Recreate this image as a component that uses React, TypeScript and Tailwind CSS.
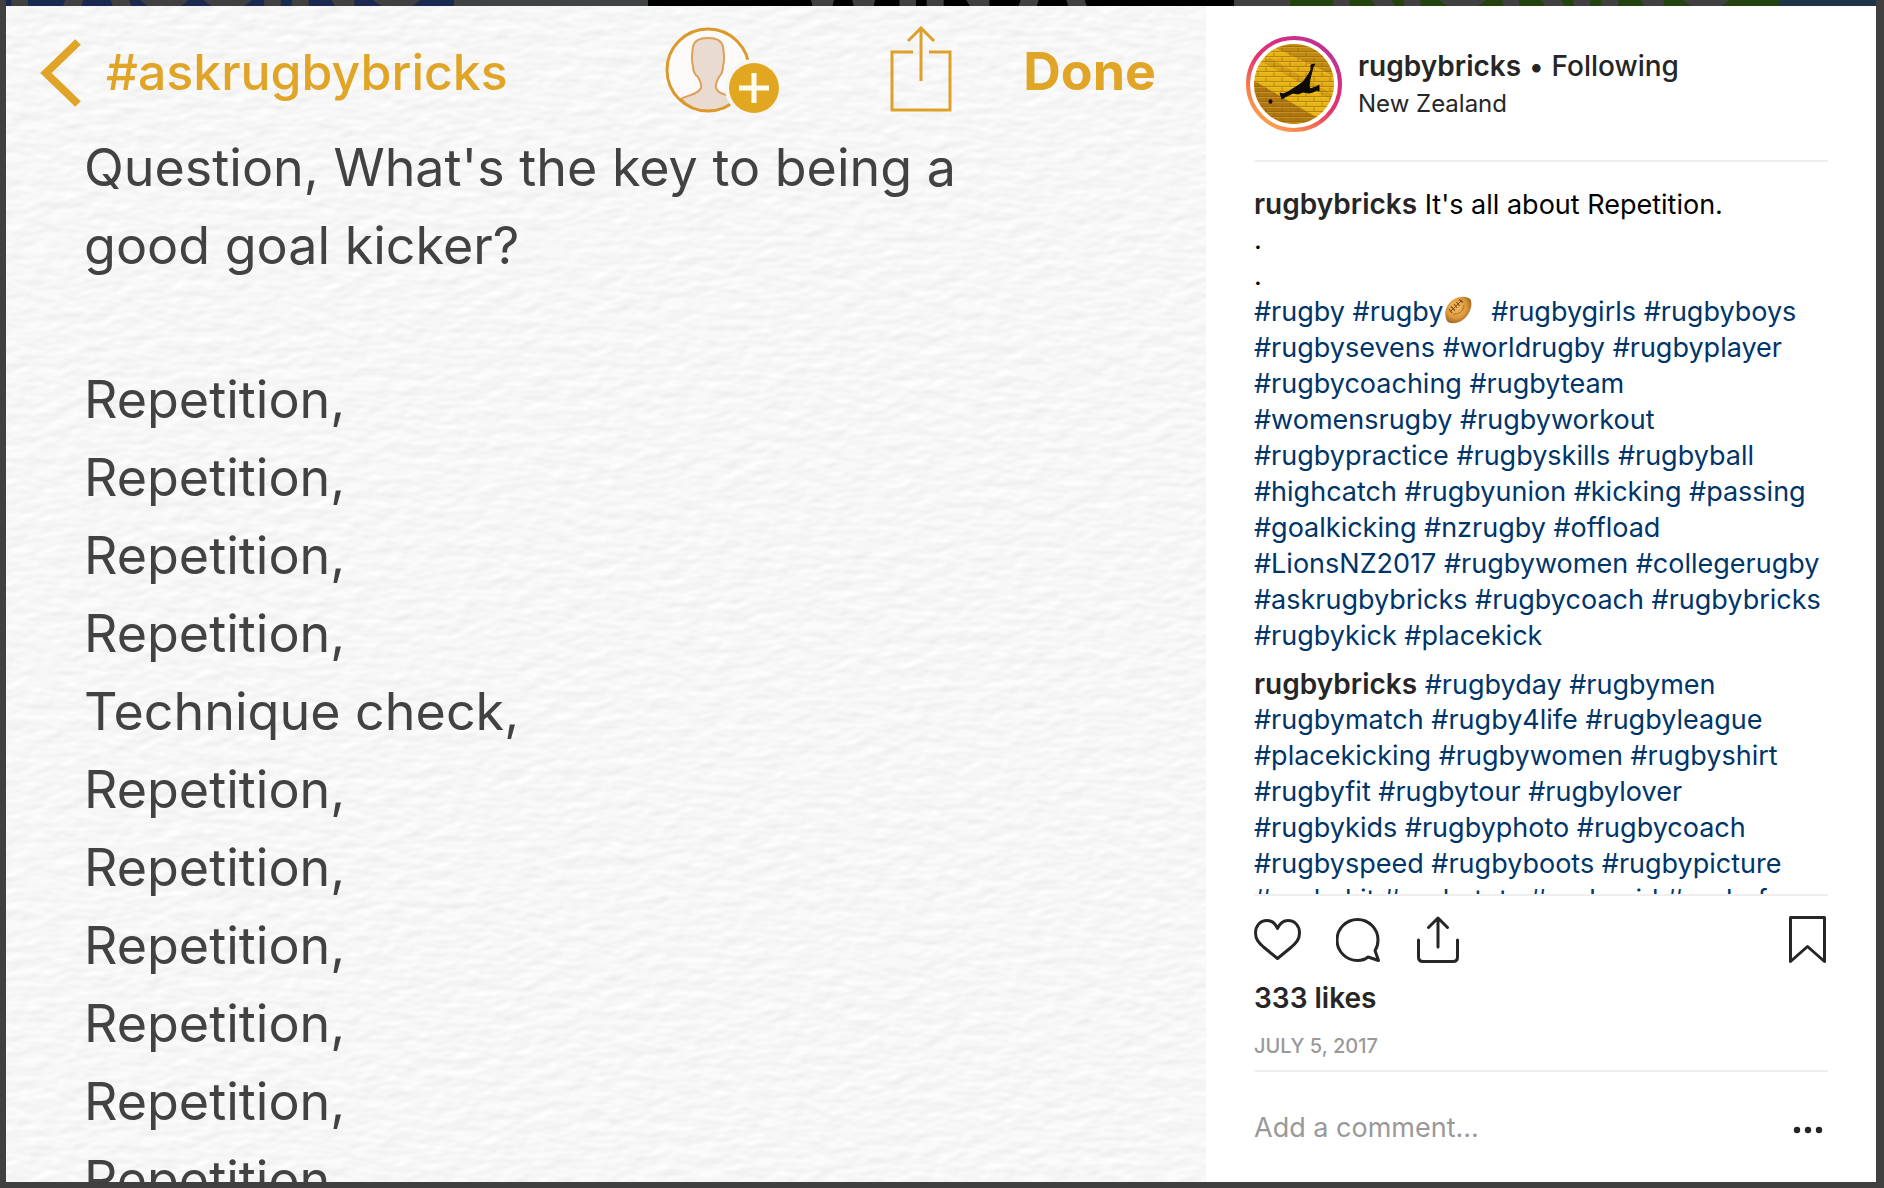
import { Fragment } from "react"

const captionRows = [
  ["#rugbysevens", "#worldrugby", "#rugbyplayer"],
  ["#rugbycoaching", "#rugbyteam"],
  ["#womensrugby", "#rugbyworkout"],
  ["#rugbypractice", "#rugbyskills", "#rugbyball"],
  ["#highcatch", "#rugbyunion", "#kicking", "#passing"],
  ["#goalkicking", "#nzrugby", "#offload"],
  ["#LionsNZ2017", "#rugbywomen", "#collegerugby"],
  ["#askrugbybricks", "#rugbycoach", "#rugbybricks"],
  ["#rugbykick", "#placekick"],
]

const commentRows = [
  ["#rugbymatch", "#rugby4life", "#rugbyleague"],
  ["#placekicking", "#rugbywomen", "#rugbyshirt"],
  ["#rugbyfit", "#rugbytour", "#rugbylover"],
  ["#rugbykids", "#rugbyphoto", "#rugbycoach"],
  ["#rugbyspeed", "#rugbyboots", "#rugbypicture"],
  ["#rugbykit", "#rugbytots", "#rugbyvid", "#rugbyfun"],
]

const noteLines = [
  "Question, What's the key to being a",
  "good goal kicker?",
  "",
  "Repetition,",
  "Repetition,",
  "Repetition,",
  "Repetition,",
  "Technique check,",
  "Repetition,",
  "Repetition,",
  "Repetition,",
  "Repetition,",
  "Repetition,",
  "Repetition,",
]

function Tags({ tags }: { tags: string[] }) {
  return (
    <>
      {tags.map((tag, i) => (
        <Fragment key={i}>
          {i > 0 && " "}
          <a href="#" className="text-[#003569]">
            {tag}
          </a>
        </Fragment>
      ))}
    </>
  )
}

function Author() {
  return (
    <a href="#" className="text-[28px] font-semibold text-[#262626]">
      rugbybricks
    </a>
  )
}

function PaperTexture() {
  return (
    <svg className="absolute inset-0 w-full h-full" aria-hidden="true">
      <filter id="paper" x="0" y="0" width="100%" height="100%" colorInterpolationFilters="sRGB">
        <feTurbulence type="fractalNoise" baseFrequency="0.045 0.09" numOctaves="2" seed="8" result="noise" />
        <feDiffuseLighting in="noise" lightingColor="#ffffff" surfaceScale="0.3" diffuseConstant="1.117">
          <feDistantLight azimuth="240" elevation="60" />
        </feDiffuseLighting>
      </filter>
      <rect width="100%" height="100%" filter="url(#paper)" />
    </svg>
  )
}

function Football() {
  return (
    <svg width="28" height="28" viewBox="0 0 28 28" className="inline-block mr-3 -mt-2" aria-label="rugby ball">
      <defs>
        <radialGradient id="ball" cx="0.42" cy="0.4" r="0.65">
          <stop offset="0" stopColor="#f6bf62" />
          <stop offset="0.6" stopColor="#dd9a3d" />
          <stop offset="1" stopColor="#9c5f1e" />
        </radialGradient>
      </defs>
      <path
        d="M1.500 20C0 13 5 4 14 1.500C19 0 24.500 1 26.500 3.500C29 9 26 18 20 23C14 28 6 28 3.500 25.500C2.300 24 1.800 22 1.500 20Z"
        fill="url(#ball)"
      />
      <path d="M20 9C20 15 14 19 9 18" fill="none" stroke="#a96c28" strokeWidth="1" />
      <path d="M6 16L18 4" stroke="#7d4c1e" strokeWidth="1" />
      <path d="M5 13l3 4M7 10.500l4 4M10 8l3 4M12.500 6l3 4M15 3.500l4 3" stroke="#7d4c1e" strokeWidth="1.200" />
    </svg>
  )
}

function Avatar() {
  return (
    <svg width="96" height="96" viewBox="0 0 96 96" className="shrink-0 -ml-2" aria-label="rugbybricks profile picture">
      <defs>
        <linearGradient id="ring" x1="0.2" y1="0.95" x2="0.8" y2="0.1">
          <stop offset="0" stopColor="#fda050" />
          <stop offset="0.22" stopColor="#f77a4d" />
          <stop offset="0.5" stopColor="#e2386c" />
          <stop offset="0.75" stopColor="#d92e7f" />
          <stop offset="1" stopColor="#bf3395" />
        </linearGradient>
        <pattern id="bricks" width="16" height="10" patternUnits="userSpaceOnUse">
          <path d="M0 .5H16M0 5.500H16M4 .5V5.500M12 5.500V10" stroke="#8a5c06" strokeWidth="0.900" opacity="0.600" />
          <path d="M0 1.500H16M0 6.500H16" stroke="#ffe15e" strokeWidth="0.500" opacity="0.500" />
        </pattern>
        <clipPath id="face">
          <circle cx="48" cy="48" r="40" />
        </clipPath>
      </defs>
      <circle cx="48" cy="48" r="46" fill="none" stroke="url(#ring)" strokeWidth="4" />
      <g clipPath="url(#face)">
        <rect width="96" height="96" fill="#e8b414" />
        <path d="M0 0H96V44L30 12L16 22Z" fill="#c18a12" />
        <path d="M22 22L92 58V44L44 20Z" fill="#e3ad16" />
        <path d="M16 26L90 66V60L24 22Z" fill="#c8920f" opacity="0.700" />
        <path d="M0 40L82 88L70 96H0Z" fill="#b07612" />
        <rect width="96" height="96" fill="url(#bricks)" />
      </g>
      <path
        d="M69 28L65 29L65 34C62 39 60 42 57 46C52 50 46 53 42 56L37 58L34 57L36 63L39 61L47 57L52 58L57 56L63 57L67 56L71 54L73 55V49L70 51L64 53L63 50L64 43C65 39 66 35 67 31Z"
        fill="#0c0a06"
        stroke="#0c0a06"
        strokeWidth="1"
      />
      <ellipse cx="24.500" cy="65.500" rx="2" ry="2.300" fill="#0c0a06" />
    </svg>
  )
}

function Note() {
  return (
    <section className="relative flex-1 min-w-0 overflow-hidden bg-[#f6f6f6]">
      <PaperTexture />
      <div className="relative">
        <header className="flex items-start justify-between h-[123px] pt-5 pl-[34px] pr-[50px] text-[#e0a526]">
          <button className="flex items-start gap-6 text-[50px] leading-[60px] font-medium">
            <svg width="42" height="70" viewBox="0 0 42 70" fill="none" className="mt-3" aria-hidden="true">
              <path d="M38 4L6 35L38 66" stroke="#e0a526" strokeWidth="8" />
            </svg>
            <span className="mt-4">#askrugbybricks</span>
          </button>
          <div className="flex items-start">
            <button aria-label="Add people" className="mr-[110px]">
              <svg width="114" height="90" viewBox="0 0 114 90" fill="none">
                <circle cx="43" cy="44" r="40.500" fill="#fbfaf8" />
                <path
                  d="M16 73C22 69 33 69 36 62C37 58 35 55 33 51C29 48 28 44 28 40C26 34 27 27 28 21C29 15 34 12 43 12C52 12 57 15 58 21C59 27 60 34 58 40C58 44 57 48 54 51C52 55 50 58 51 62C53 69 64 68 71 73C63 81 54 85 43 85C32 85 23 81 16 73Z"
                  fill="#eadbd1"
                  stroke="#dda05b"
                  strokeWidth="2"
                />
                <circle cx="43" cy="44" r="41" stroke="#dd982b" strokeWidth="3" />
                <circle cx="89" cy="62" r="29" fill="#f7f6f4" />
                <circle cx="89" cy="62" r="25" fill="#e2a721" />
                <path d="M74 62H104M89 47V77" stroke="#fffdf0" strokeWidth="5" />
              </svg>
            </button>
            <button aria-label="Share note" className="mr-[70px]">
              <svg width="64" height="90" viewBox="0 0 64 90" fill="none" stroke="#dda02a" strokeWidth="3">
                <path d="M24 26H3V84H61V26H40" />
                <path d="M32 55V3M19 15L32 2L45 15" />
              </svg>
            </button>
            <button className="pt-4 text-[52px] leading-[60px] font-bold">Done</button>
          </div>
        </header>
        <div className="pl-[78px] text-[52px] leading-[78px] text-[#424242] whitespace-nowrap">
          {noteLines.map((line, i) => (line ? <p key={i}>{line}</p> : <div key={i} className="h-[76px]" />))}
        </div>
      </div>
    </section>
  )
}

function PostDetails() {
  return (
    <aside className="flex flex-col w-[670px] shrink-0 px-12 bg-white text-[27px] leading-9 text-black whitespace-nowrap">
      <header className="flex items-center gap-4 h-[156px] shrink-0 pt-0.5 border-b-2 border-[#efefef] text-[#262626]">
        <Avatar />
        <div className="pt-0.5">
          <p className="h-9">
            <Author /> • <button className="text-[28px] font-medium">Following</button>
          </p>
          <a href="#" className="block mt-0.5 text-2xl leading-9">
            New Zealand
          </a>
        </div>
      </header>

      <div className="flex-1 min-h-0 overflow-hidden pt-6">
        <div className="mb-3">
          <p className="h-9">
            <Author /> It's all about Repetition.
          </p>
          <p>.</p>
          <p>.</p>
          <p className="h-9">
            <Tags tags={["#rugby", "#rugby"]} />
            <Football />
            <span> </span>
            <Tags tags={["#rugbygirls", "#rugbyboys"]} />
          </p>
          {captionRows.map((row) => (
            <p key={row[0]}>
              <Tags tags={row} />
            </p>
          ))}
        </div>
        <p className="h-9">
          <Author /> <Tags tags={["#rugbyday", "#rugbymen"]} />
        </p>
        {commentRows.map((row) => (
          <p key={row[0]}>
            <Tags tags={row} />
          </p>
        ))}
      </div>

      <section className="shrink-0 border-y-2 border-[#efefef] pt-5 pb-2.5 text-[#262626]">
        <div className="flex items-center h-12 mb-4">
          <button aria-label="Like" className="mr-[34px]">
            <svg width="48" height="48" viewBox="0 0 48 48" fill="none" stroke="currentColor" strokeWidth="3" strokeLinejoin="round">
              <path d="M23.500 12.500C21 7 17.500 4.500 13 4.500C6 4.500 1.500 10 1.500 17C1.500 23.500 5 27 9.500 31L23.500 42.500L37.500 31C42 27 45.500 23.500 45.500 17C45.500 10 41 4.500 34 4.500C29.500 4.500 26 7 23.500 12.500Z" />
            </svg>
          </button>
          <button aria-label="Comment" className="mr-8">
            <svg width="48" height="48" viewBox="0 0 48 48" fill="none" stroke="currentColor" strokeWidth="3" strokeLinejoin="round">
              <path d="M39 34.500C41.500 31 42 28 42 24A20.500 20.500 0 1 0 21.500 44.500C26 44.500 29 43.500 32 41L42.500 44.500Z" />
            </svg>
          </button>
          <button aria-label="Share">
            <svg width="48" height="48" viewBox="0 0 48 48" fill="none" stroke="currentColor" strokeWidth="3" strokeLinecap="round" strokeLinejoin="round">
              <path d="M2.500 24V41Q2.500 45.500 7 45.500H37Q41.500 45.500 41.500 41V24M22 31V2M12.500 11.500L22 2L31.500 11.500" />
            </svg>
          </button>
          <button aria-label="Save" className="ml-auto">
            <svg width="40" height="48" viewBox="0 0 40 48" fill="none" stroke="currentColor" strokeWidth="3" strokeLinejoin="round">
              <path d="M2.500 1.500H36.500V45.500L19.500 30.500L2.500 45.500Z" />
            </svg>
          </button>
        </div>
        <button className="block text-[28px] leading-9 font-semibold">333 likes</button>
        <time dateTime="2017-07-05" className="block mt-4 text-xl leading-7 font-medium text-[#999999]">
          JULY 5, 2017
        </time>
      </section>

      <form className="flex items-center h-[110px] shrink-0 pt-0.5">
        <input
          type="text"
          aria-label="Add a comment"
          placeholder="Add a comment..."
          className="flex-1 min-w-0 outline-none placeholder:text-[#999999]"
        />
        <button type="button" aria-label="More options">
          <svg width="36" height="24" viewBox="0 0 36 24" fill="#262626">
            <circle cx="5" cy="14" r="3.200" />
            <circle cx="16" cy="14" r="3.200" />
            <circle cx="27" cy="14" r="3.200" />
          </svg>
        </button>
      </form>
    </aside>
  )
}

// sliver of the profile page that shows above the post
function Backdrop() {
  return (
    <div
      className="flex h-1.5 shrink-0 overflow-hidden pl-1.5 pr-2 text-8xl leading-[66px] font-extrabold text-[#404040] whitespace-nowrap"
      aria-hidden="true"
    >
      <div className="flex items-end w-[448px] h-1.5 bg-[#1a2950]">PASSING</div>
      <div className="w-[194px] h-1.5 bg-[#404344]" />
      <div className="flex items-end justify-center w-[586px] h-1.5 bg-black">WIN A</div>
      <div className="w-[56px] h-1.5" />
      <div className="flex items-end justify-center w-[489px] h-1.5 bg-[#24420f]">KICKING</div>
      <div className="flex-1 h-1.5 bg-[#203448]" />
    </div>
  )
}

export default function App() {
  return (
    <div className="flex flex-col h-screen overflow-hidden bg-[#404040] font-['Inter','Liberation_Sans',sans-serif]">
      <Backdrop />
      <div className="flex flex-1 min-h-0 pl-1.5 pr-2 pb-1.5">
        <Note />
        <PostDetails />
      </div>
    </div>
  )
}
